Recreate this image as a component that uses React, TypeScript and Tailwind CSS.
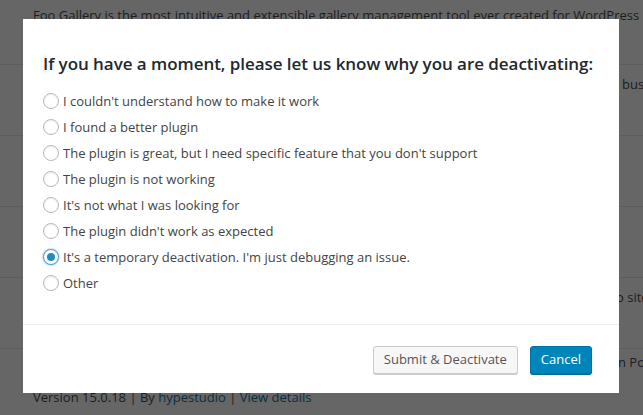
import React, { useState } from 'react';

const reasons = [
  "I couldn't understand how to make it work",
  'I found a better plugin',
  "The plugin is great, but I need specific feature that you don't support",
  'The plugin is not working',
  "It's not what I was looking for",
  "The plugin didn't work as expected",
  "It's a temporary deactivation. I'm just debugging an issue.",
  'Other',
];

function Radio({ checked }: { checked: boolean }) {
  return (
    <span
      className={
        checked
          ? 'flex h-4 w-4 shrink-0 items-center justify-center rounded-full border border-[#5b9dd9] bg-white shadow-[0_0_2px_rgba(30,140,190,0.8)]'
          : 'flex h-4 w-4 shrink-0 items-center justify-center rounded-full border border-[#b4b9be] bg-white shadow-[inset_0_1px_2px_rgba(0,0,0,0.07)]'
      }
    >
      {checked && <span className="h-2 w-2 rounded-full bg-[#1e8cbe]" />}
    </span>
  );
}

// the plugin list behind the overlay, already darkened
function BackgroundList() {
  return (
    <div className="flex flex-col text-[13px] text-[#1c1d1e]">
      <div className="h-[65px] border-b border-[#5c5c5c] pl-[33px] pt-[6px] whitespace-nowrap">
        Foo Gallery is the most intuitive and extensible gallery management tool ever created for WordPress
      </div>
      <div className="h-[71px] border-b border-[#5c5c5c] pl-[622px] pt-[10px] whitespace-nowrap">
        bus
      </div>
      <div className="h-[71px] border-b border-[#5c5c5c]" />
      <div className="h-[71px] border-b border-[#5c5c5c]" />
      <div className="h-[71px] border-b border-[#5c5c5c] pl-[616px] pt-[10px] whitespace-nowrap">
        o site
      </div>
      <div className="flex h-[66px] flex-col pl-[33px] pt-[4px] whitespace-nowrap">
        <span className="pl-[585px]">n Pos</span>
        <span className="mt-[15px]">
          Version 15.0.18 | By <span className="text-[#0a2f42]">hypestudio</span> |{' '}
          <span className="text-[#0a2f42]">View details</span>
        </span>
      </div>
    </div>
  );
}

export default function App() {
  const [selected, setSelected] = useState(6);

  return (
    <div
      className="relative h-[415px] w-[643px] overflow-hidden bg-[#666666]"
      style={{ fontFamily: '"Open Sans", "Noto Sans", sans-serif' }}
    >
      <BackgroundList />

      <div className="absolute left-[23px] top-[19px] flex h-[374px] w-[596px] flex-col bg-white">
        <div className="h-[306px] border-b border-[#eeeeee] px-5 pt-[33px]">
          <h2 className="text-[17px] font-semibold leading-[24px] tracking-[-0.05px] text-[#23282d]">
            If you have a moment, please let us know why you are deactivating:
          </h2>
          <ul className="mt-[15px] flex flex-col">
            {reasons.map((r, i) => (
              <li key={r} className="h-[26px]">
                <label
                  className="flex cursor-pointer items-center gap-[4px] text-[13px] leading-[20px] text-[#444]"
                  onClick={() => setSelected(i)}
                >
                  <Radio checked={selected === i} />
                  <span>{r}</span>
                </label>
              </li>
            ))}
          </ul>
        </div>
        <div className="flex flex-1 items-center justify-end gap-3 pr-[27px] pt-[2px]">
          <button className="h-7 rounded-[3px] border border-[#cccccc] bg-[#f7f7f7] px-[10px] text-[13px] text-[#555] shadow-[0_1px_0_#ccc]">
            Submit &amp; Deactivate
          </button>
          <button className="h-7 rounded-[3px] border border-[#0073aa] bg-[#0085ba] px-[10px] text-[13px] text-white shadow-[0_1px_0_#006799]">
            Cancel
          </button>
        </div>
      </div>
    </div>
  );
}
